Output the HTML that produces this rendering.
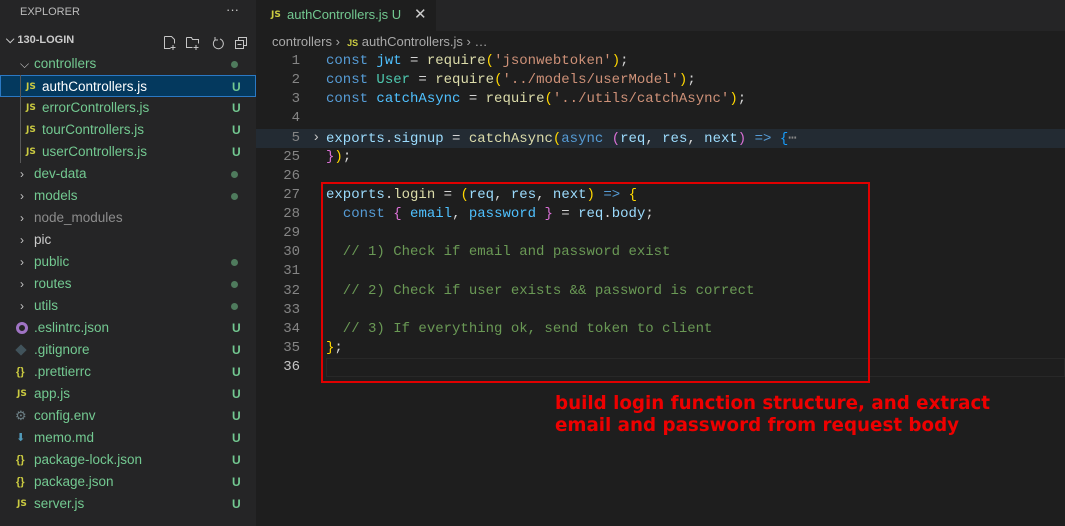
<!DOCTYPE html>
<html><head><meta charset="utf-8"><style>
*{margin:0;padding:0;box-sizing:border-box}
body{width:1065px;height:526px;background:#1e1e1e;overflow:hidden;position:relative;font-family:"Liberation Sans","DejaVu Sans",sans-serif}
#side{position:absolute;left:0;top:0;width:256px;height:526px;background:#252526}
.row{position:absolute;left:0;width:256px;height:22px;line-height:22px;font-size:13.5px;color:#73c991}
.row .u{position:absolute;left:232px;font-weight:bold;font-size:12px}
.row .dot{position:absolute;left:231px;top:8px;width:7px;height:7px;border-radius:50%;background:#4f7b5d}
.js{position:absolute;font-size:9px;font-weight:bold;color:#cbcb41;font-family:"DejaVu Sans",sans-serif}
.chev{position:absolute;color:#c5c5c5;font-size:12px}
#code{position:absolute;left:256px;top:53px;font-family:"Liberation Mono",monospace;font-size:14px}
.ln{position:absolute;width:44px;text-align:right;color:#858585;left:0}
.cl{position:absolute;left:70px;white-space:pre;color:#d4d4d4}
.k{color:#569cd6}.v{color:#9cdcfe}.f{color:#dcdcaa}.s{color:#ce9178}.y{color:#ffd700}.p{color:#da70d6}.c{color:#6a9955}.b{color:#4fc1ff}
</style></head><body>
<div id="side">
<div style="position:absolute;left:20px;top:6px;font-size:11px;color:#bbb">EXPLORER</div>
<div style="position:absolute;left:226px;top:2px;font-size:13px;color:#ccc">···</div>
<div style="position:absolute;left:6px;top:34px;font-size:11px;font-weight:bold;color:#ccc">⌵ 130-LOGIN</div>
<svg style="position:absolute;left:163px;top:35px" width="88" height="16" fill="none" stroke="#c5c5c5" stroke-width="1"><path d="M1.5 1.5h7l3 3v4M1.5 1.5v12h6M10 10v5M7.5 12.5h5"/><path d="M23.5 2.5h5l1 2h6v4M23.5 2.5v10h6M33 10v5M30.5 12.5h5"/><path d="M57 4a5 5 0 1 1-5 1M52 2v3h3"/><path d="M72.5 5.5h8v8h-8zM75.5 5.5v-3h8v8h-3M74.5 9.5h4"/></svg>
<div class="row" style="top:53px"><span class="chev" style="left:20px">⌵</span><span style="position:absolute;left:34px">controllers</span><span class="dot"></span></div>
<div class="row" style="top:75px;background:#04395e;border:1px solid #2b79c4;color:#fff"><span class="js" style="left:25px">JS</span><span style="position:absolute;left:41px">authControllers.js</span><span class="u" style="left:231px;color:#73c991">U</span></div>
<div class="row" style="top:97px"><span class="js" style="left:26px">JS</span><span style="position:absolute;left:42px">errorControllers.js</span><span class="u">U</span></div>
<div class="row" style="top:119px"><span class="js" style="left:26px">JS</span><span style="position:absolute;left:42px">tourControllers.js</span><span class="u">U</span></div>
<div class="row" style="top:141px"><span class="js" style="left:26px">JS</span><span style="position:absolute;left:42px">userControllers.js</span><span class="u">U</span></div>
<div style="position:absolute;left:20px;top:75px;width:1px;height:88px;background:#585858"></div>
<div class="row" style="top:163px"><span class="chev" style="left:20px">›</span><span style="position:absolute;left:34px">dev-data</span><span class="dot"></span></div>
<div class="row" style="top:185px"><span class="chev" style="left:20px">›</span><span style="position:absolute;left:34px">models</span><span class="dot"></span></div>
<div class="row" style="top:207px;color:#8c8c8c"><span class="chev" style="left:20px">›</span><span style="position:absolute;left:34px">node_modules</span></div>
<div class="row" style="top:229px;color:#ccc"><span class="chev" style="left:20px">›</span><span style="position:absolute;left:34px">pic</span></div>
<div class="row" style="top:251px"><span class="chev" style="left:20px">›</span><span style="position:absolute;left:34px">public</span><span class="dot"></span></div>
<div class="row" style="top:273px"><span class="chev" style="left:20px">›</span><span style="position:absolute;left:34px">routes</span><span class="dot"></span></div>
<div class="row" style="top:295px"><span class="chev" style="left:20px">›</span><span style="position:absolute;left:34px">utils</span><span class="dot"></span></div>
<div class="row" style="top:317px"><span style="position:absolute;left:16px;top:5px;width:12px;height:12px;border-radius:50%;border:3px solid #a074c4"></span><span style="position:absolute;left:34px">.eslintrc.json</span><span class="u">U</span></div>
<div class="row" style="top:339px"><span style="position:absolute;left:17px;top:7px;width:8px;height:8px;background:#41535b;transform:rotate(45deg)"></span><span style="position:absolute;left:34px">.gitignore</span><span class="u">U</span></div>
<div class="row" style="top:361px"><span style="position:absolute;left:16px;color:#cbcb41;font-size:11px;font-weight:bold">{}</span><span style="position:absolute;left:34px">.prettierrc</span><span class="u">U</span></div>
<div class="row" style="top:383px"><span class="js" style="left:17px">JS</span><span style="position:absolute;left:34px">app.js</span><span class="u">U</span></div>
<div class="row" style="top:405px"><span style="position:absolute;left:15px;color:#6d8086;font-size:13px">⚙</span><span style="position:absolute;left:34px">config.env</span><span class="u">U</span></div>
<div class="row" style="top:427px"><span style="position:absolute;left:16px;color:#519aba;font-size:11px">⬇</span><span style="position:absolute;left:34px">memo.md</span><span class="u">U</span></div>
<div class="row" style="top:449px"><span style="position:absolute;left:16px;color:#cbcb41;font-size:11px;font-weight:bold">{}</span><span style="position:absolute;left:34px">package-lock.json</span><span class="u">U</span></div>
<div class="row" style="top:471px"><span style="position:absolute;left:16px;color:#cbcb41;font-size:11px;font-weight:bold">{}</span><span style="position:absolute;left:34px">package.json</span><span class="u">U</span></div>
<div class="row" style="top:493px"><span class="js" style="left:17px">JS</span><span style="position:absolute;left:34px">server.js</span><span class="u">U</span></div>
</div>
<div style="position:absolute;left:256px;top:0;width:809px;height:31px;background:#252526"></div>
<div style="position:absolute;left:256px;top:0;width:180px;height:31px;background:#1e1e1e;font-size:13px;color:#73c991;line-height:30px"><span class="js" style="left:15px;top:0">JS</span><span style="position:absolute;left:31px">authControllers.js U</span><span style="position:absolute;left:158px;color:#ccc;font-size:15px">✕</span></div>
<div style="position:absolute;left:272px;top:34px;font-size:13px;color:#a9a9a9;white-space:pre">controllers ›  <span style="font-size:9px;font-weight:bold;color:#cbcb41">JS</span> authControllers.js › …</div>
<div style="position:absolute;left:256px;top:129px;width:809px;height:19px;background:#232b33"></div>
<div style="position:absolute;left:326px;top:358px;width:739px;height:19px;border:1px solid #282828"></div>
<div id="code">
<div class="ln" style="top:0">1</div><div class="cl" style="top:0"><span class="k">const</span> <span class="b">jwt</span> = <span class="f">require</span><span class="y">(</span><span class="s">'jsonwebtoken'</span><span class="y">)</span>;</div>
<div class="ln" style="top:19px">2</div><div class="cl" style="top:19px"><span class="k">const</span> <span class="b" style="color:#4ec9b0">User</span> = <span class="f">require</span><span class="y">(</span><span class="s">'../models/userModel'</span><span class="y">)</span>;</div>
<div class="ln" style="top:38px">3</div><div class="cl" style="top:38px"><span class="k">const</span> <span class="b">catchAsync</span> = <span class="f">require</span><span class="y">(</span><span class="s">'../utils/catchAsync'</span><span class="y">)</span>;</div>
<div class="ln" style="top:57px">4</div>
<div class="ln" style="top:77px">5</div><div class="cl" style="top:77px;left:56px;color:#c5c5c5">›</div><div class="cl" style="top:77px"><span class="v">exports</span>.<span class="v">signup</span> = <span class="f">catchAsync</span><span class="y">(</span><span class="k">async</span> <span class="p">(</span><span class="v">req</span>, <span class="v">res</span>, <span class="v">next</span><span class="p">)</span> <span class="k">=&gt;</span> <span class="b" style="color:#179fff">{</span><span style="color:#888">⋯</span></div>
<div class="ln" style="top:96px">25</div><div class="cl" style="top:96px"><span class="p">}</span><span class="y">)</span>;</div>
<div class="ln" style="top:115px">26</div>
<div class="ln" style="top:134px">27</div><div class="cl" style="top:134px"><span class="v">exports</span>.<span class="f">login</span> = <span class="y">(</span><span class="v">req</span>, <span class="v">res</span>, <span class="v">next</span><span class="y">)</span> <span class="k">=&gt;</span> <span class="y">{</span></div>
<div class="ln" style="top:153px">28</div><div class="cl" style="top:153px">  <span class="k">const</span> <span class="p">{</span> <span class="b">email</span>, <span class="b">password</span> <span class="p">}</span> = <span class="v">req</span>.<span class="v">body</span>;</div>
<div class="ln" style="top:172px">29</div>
<div class="ln" style="top:191px">30</div><div class="cl c" style="top:191px">  // 1) Check if email and password exist</div>
<div class="ln" style="top:210px">31</div>
<div class="ln" style="top:230px">32</div><div class="cl c" style="top:230px">  // 2) Check if user exists &amp;&amp; password is correct</div>
<div class="ln" style="top:249px">33</div>
<div class="ln" style="top:268px">34</div><div class="cl c" style="top:268px">  // 3) If everything ok, send token to client</div>
<div class="ln" style="top:287px">35</div><div class="cl" style="top:287px"><span class="y">}</span>;</div>
<div class="ln" style="top:306px;color:#c6c6c6">36</div>
</div>
<div style="position:absolute;left:321px;top:182px;width:549px;height:201px;border:2px solid #e00000"></div>
<div style="position:absolute;left:555px;top:393px;font-family:'DejaVu Sans',sans-serif;font-weight:bold;font-size:18.3px;line-height:22px;color:#ee0000;white-space:nowrap">build login function structure, and extract<br>email and password from request body</div>
</body></html>
